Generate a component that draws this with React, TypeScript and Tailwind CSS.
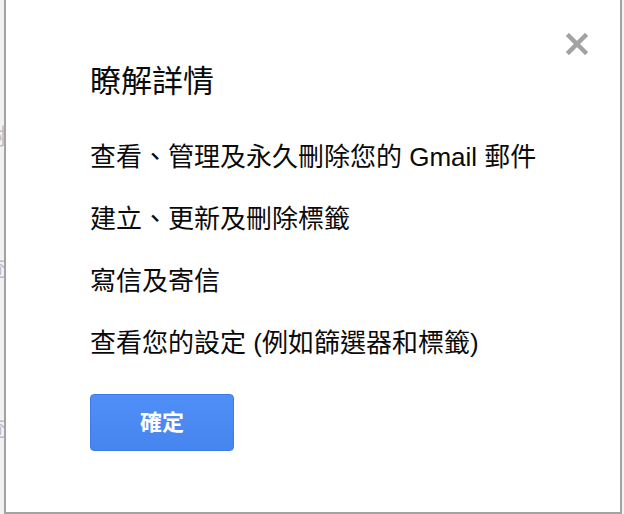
import React from 'react'

const ITEMS = [
  '查看、管理及永久刪除您的 Gmail 郵件',
  '建立、更新及刪除標籤',
  '寫信及寄信',
  '查看您的設定 (例如篩選器和標籤)',
]

const FONT = "font-['Liberation_Sans','Noto_Sans_CJK_TC',sans-serif]"

export default function App() {
  return (
    <div className={`relative w-[624px] h-[514px] overflow-hidden bg-[#f2f2f2] ${FONT}`}>
      {/* page content behind the dialog, only its edge shows */}
      <div className="flex flex-col text-[22px] leading-none text-[#b8bcc4] ml-[-16px] pt-[126px] gap-[110px]">
        <span>樹</span>
        <span>查</span>
        <span className="mt-[28px]">查</span>
      </div>

      {/* dialog */}
      <div className="absolute left-[4px] top-[-2px] w-[618px] h-[516px] bg-white border-2 border-[#a3a3a3]">
        <button className="absolute right-[32px] top-[33px] w-[22px] h-[22px]" aria-label="關閉">
          <svg viewBox="0 0 22 22" width="22" height="22">
            <path d="M3 3 L19 19 M19 3 L3 19" stroke="#a2a2a2" strokeWidth="4.5" strokeLinecap="square" />
          </svg>
        </button>

        <div className="flex flex-col items-start pl-[84px] pt-[64px]">
          <h1 className="text-[31px] leading-[36px] text-[#0a0a0a] font-normal">瞭解詳情</h1>
          <div className="flex flex-col gap-[26px] mt-[39px]">
            {ITEMS.map((t) => (
              <p key={t} className="text-[26px] leading-[36px] text-[#0a0a0a] whitespace-nowrap">
                {t}
              </p>
            ))}
          </div>
          <button
            className="mt-[33px] w-[144px] h-[57px] rounded-[4px] border border-[#3a7ce8]
                       bg-gradient-to-b from-[#4f8ff7] to-[#4685ee] text-white text-[22px] font-bold"
          >
            確定
          </button>
        </div>
      </div>
    </div>
  )
}
